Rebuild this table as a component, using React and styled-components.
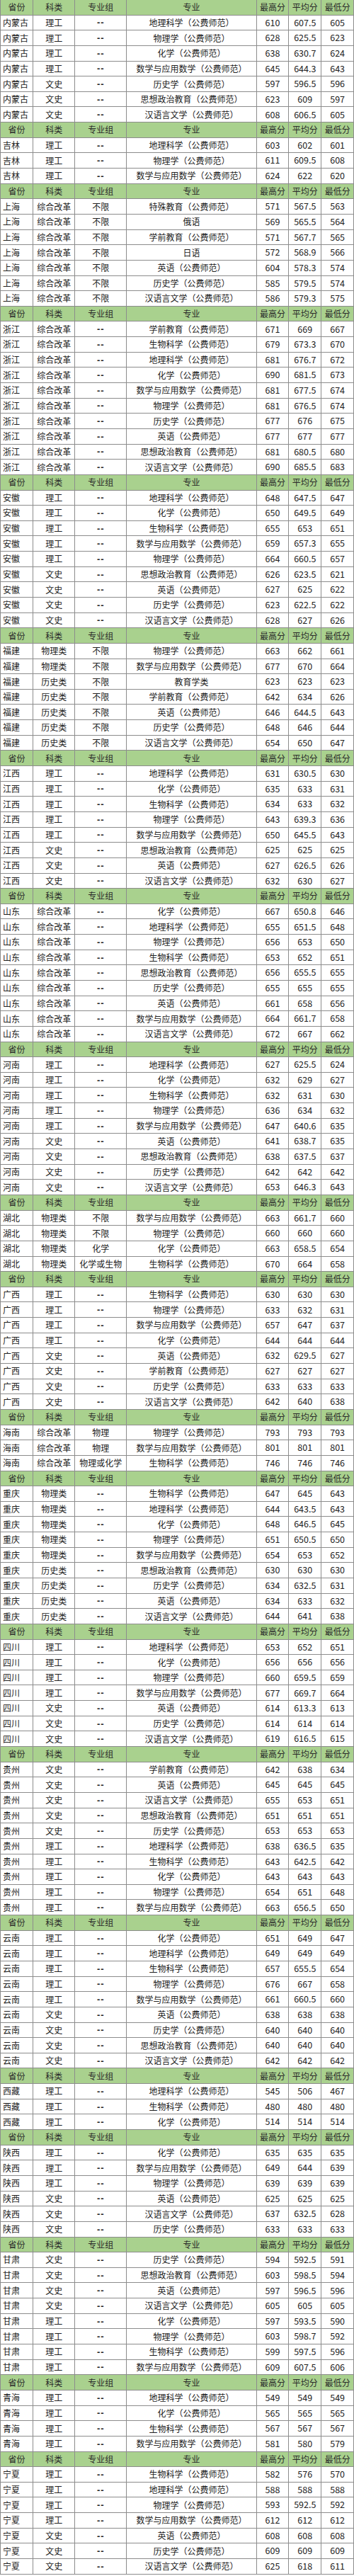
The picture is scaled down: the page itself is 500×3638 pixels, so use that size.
import React from "react";
import styled, { createGlobalStyle } from "styled-components";

const GlobalStyle = createGlobalStyle`
    html, body {
        margin: 0;
        padding: 0;
        background: #ffffff;
    }
    body {
        font-family: "Noto Sans CJK SC", "Liberation Sans", sans-serif;
        color: #222222;
    }
`;

const ROWS_TOTAL = 168;

const Sheet = styled.div`
    width: 500px;
    display: grid;
    grid-template-columns: 46px 59.3px 73px 183.4px 45.6px 46px 1fr;
    grid-auto-rows: calc(3638px / ${ROWS_TOTAL});
    border-left: 1px solid #8c8c8c;
    box-sizing: border-box;
`;

const Cell = styled.div`
    box-sizing: border-box;
    display: flex;
    align-items: center;
    justify-content: ${(p) => (p.$left ? "flex-start" : "center")};
    padding-left: ${(p) => (p.$left ? "3px" : "0")};
    border-right: 1px solid #8c8c8c;
    border-bottom: 1px solid #8c8c8c;
    background: ${(p) => (p.$head ? "#a9d18e" : "#ffffff")};
    font-size: 12px;
    line-height: 1;
    white-space: nowrap;
    overflow: hidden;
    color: ${(p) => (p.$head ? "#2b2b2b" : "#222222")};
`;

const Num = styled(Cell)`
    font-size: 12.5px;
`;

const Dash = styled(Cell)`
    font-family: "Liberation Sans", sans-serif;
    font-size: 13px;
    font-weight: bold;
    letter-spacing: 1px;
`;

const G = "（公费师范）";

const groups = [
    { p: "内蒙古", rows: [
        ["理工", "--", "地理科学" + G, "610", "607.5", "605"],
        ["理工", "--", "物理学" + G, "628", "625.5", "623"],
        ["理工", "--", "化学" + G, "638", "630.7", "624"],
        ["理工", "--", "数学与应用数学" + G, "645", "644.3", "643"],
        ["文史", "--", "历史学" + G, "597", "596.5", "596"],
        ["文史", "--", "思想政治教育" + G, "623", "609", "597"],
        ["文史", "--", "汉语言文学" + G, "608", "606.5", "605"],
    ]},
    { p: "吉林", rows: [
        ["理工", "--", "地理科学" + G, "603", "602", "601"],
        ["理工", "--", "物理学" + G, "611", "609.5", "608"],
        ["理工", "--", "数学与应用数学" + G, "624", "622", "620"],
    ]},
    { p: "上海", rows: [
        ["综合改革", "不限", "特殊教育" + G, "571", "567.5", "563"],
        ["综合改革", "不限", "俄语", "569", "565.5", "564"],
        ["综合改革", "不限", "学前教育" + G, "571", "567.7", "565"],
        ["综合改革", "不限", "日语", "572", "568.9", "566"],
        ["综合改革", "不限", "英语" + G, "604", "578.3", "574"],
        ["综合改革", "不限", "历史学" + G, "585", "579.5", "574"],
        ["综合改革", "不限", "汉语言文学" + G, "586", "579.3", "575"],
    ]},
    { p: "浙江", rows: [
        ["综合改革", "--", "学前教育" + G, "671", "669", "667"],
        ["综合改革", "--", "生物科学" + G, "679", "673.3", "670"],
        ["综合改革", "--", "地理科学" + G, "681", "676.7", "672"],
        ["综合改革", "--", "化学" + G, "690", "681.5", "673"],
        ["综合改革", "--", "数学与应用数学" + G, "681", "677.5", "674"],
        ["综合改革", "--", "物理学" + G, "681", "676.5", "674"],
        ["综合改革", "--", "历史学" + G, "677", "676", "675"],
        ["综合改革", "--", "英语" + G, "677", "677", "677"],
        ["综合改革", "--", "思想政治教育" + G, "681", "680.5", "680"],
        ["综合改革", "--", "汉语言文学" + G, "690", "685.5", "683"],
    ]},
    { p: "安徽", rows: [
        ["理工", "--", "地理科学" + G, "648", "647.5", "647"],
        ["理工", "--", "化学" + G, "650", "649.5", "649"],
        ["理工", "--", "生物科学" + G, "655", "653", "651"],
        ["理工", "--", "数学与应用数学" + G, "659", "657.3", "655"],
        ["理工", "--", "物理学" + G, "664", "660.5", "657"],
        ["文史", "--", "思想政治教育" + G, "626", "623.5", "621"],
        ["文史", "--", "英语" + G, "627", "625", "622"],
        ["文史", "--", "历史学" + G, "623", "622.5", "622"],
        ["文史", "--", "汉语言文学" + G, "628", "627", "626"],
    ]},
    { p: "福建", rows: [
        ["物理类", "不限", "物理学" + G, "663", "662", "661"],
        ["物理类", "不限", "数学与应用数学" + G, "677", "670", "664"],
        ["历史类", "不限", "教育学类", "623", "623", "623"],
        ["历史类", "不限", "学前教育" + G, "642", "634", "626"],
        ["历史类", "不限", "英语" + G, "646", "644.5", "643"],
        ["历史类", "不限", "历史学" + G, "648", "646", "644"],
        ["历史类", "不限", "汉语言文学" + G, "654", "650", "647"],
    ]},
    { p: "江西", rows: [
        ["理工", "--", "地理科学" + G, "631", "630.5", "630"],
        ["理工", "--", "化学" + G, "635", "633", "631"],
        ["理工", "--", "生物科学" + G, "634", "633", "632"],
        ["理工", "--", "物理学" + G, "643", "639.3", "636"],
        ["理工", "--", "数学与应用数学" + G, "650", "645.5", "643"],
        ["文史", "--", "思想政治教育" + G, "625", "625", "625"],
        ["文史", "--", "英语" + G, "627", "626.5", "626"],
        ["文史", "--", "汉语言文学" + G, "632", "630", "627"],
    ]},
    { p: "山东", rows: [
        ["综合改革", "--", "化学" + G, "667", "650.8", "646"],
        ["综合改革", "--", "地理科学" + G, "655", "651.5", "648"],
        ["综合改革", "--", "物理学" + G, "656", "653", "650"],
        ["综合改革", "--", "生物科学" + G, "653", "652", "651"],
        ["综合改革", "--", "思想政治教育" + G, "656", "655.5", "655"],
        ["综合改革", "--", "历史学" + G, "655", "655", "655"],
        ["综合改革", "--", "英语" + G, "661", "658", "656"],
        ["综合改革", "--", "数学与应用数学" + G, "664", "661.7", "658"],
        ["综合改革", "--", "汉语言文学" + G, "672", "667", "662"],
    ]},
    { p: "河南", rows: [
        ["理工", "--", "地理科学" + G, "627", "625.5", "624"],
        ["理工", "--", "化学" + G, "632", "629", "627"],
        ["理工", "--", "生物科学" + G, "632", "631", "630"],
        ["理工", "--", "物理学" + G, "636", "634", "632"],
        ["理工", "--", "数学与应用数学" + G, "647", "640.6", "635"],
        ["文史", "--", "英语" + G, "641", "638.7", "635"],
        ["文史", "--", "思想政治教育" + G, "638", "637.5", "637"],
        ["文史", "--", "历史学" + G, "642", "642", "642"],
        ["文史", "--", "汉语言文学" + G, "653", "646.3", "643"],
    ]},
    { p: "湖北", rows: [
        ["物理类", "不限", "数学与应用数学" + G, "663", "661.7", "660"],
        ["物理类", "不限", "物理学" + G, "660", "660", "660"],
        ["物理类", "化学", "化学" + G, "663", "658.5", "654"],
        ["物理类", "化学或生物", "生物科学" + G, "670", "664", "658"],
    ]},
    { p: "广西", rows: [
        ["理工", "--", "生物科学" + G, "630", "630", "630"],
        ["理工", "--", "物理学" + G, "633", "632", "631"],
        ["理工", "--", "数学与应用数学" + G, "657", "647", "637"],
        ["理工", "--", "化学" + G, "644", "644", "644"],
        ["文史", "--", "英语" + G, "632", "629.5", "627"],
        ["文史", "--", "学前教育" + G, "627", "627", "627"],
        ["文史", "--", "历史学" + G, "633", "633", "633"],
        ["文史", "--", "汉语言文学" + G, "642", "640", "638"],
    ]},
    { p: "海南", rows: [
        ["综合改革", "物理", "物理学" + G, "793", "793", "793"],
        ["综合改革", "物理", "数学与应用数学" + G, "801", "801", "801"],
        ["综合改革", "物理或化学", "生物科学" + G, "746", "746", "746"],
    ]},
    { p: "重庆", rows: [
        ["物理类", "--", "生物科学" + G, "647", "645", "643"],
        ["物理类", "--", "地理科学" + G, "644", "643.5", "643"],
        ["物理类", "--", "化学" + G, "648", "646.5", "645"],
        ["物理类", "--", "物理学" + G, "651", "650.5", "650"],
        ["物理类", "--", "数学与应用数学" + G, "654", "653", "652"],
        ["历史类", "--", "思想政治教育" + G, "630", "630", "630"],
        ["历史类", "--", "历史学" + G, "634", "632.5", "631"],
        ["历史类", "--", "英语" + G, "634", "633", "632"],
        ["历史类", "--", "汉语言文学" + G, "644", "641", "638"],
    ]},
    { p: "四川", rows: [
        ["理工", "--", "地理科学" + G, "653", "652", "651"],
        ["理工", "--", "化学" + G, "656", "656", "656"],
        ["理工", "--", "物理学" + G, "660", "659.5", "659"],
        ["理工", "--", "数学与应用数学" + G, "677", "669.7", "664"],
        ["文史", "--", "英语" + G, "614", "613.3", "613"],
        ["文史", "--", "历史学" + G, "614", "614", "614"],
        ["文史", "--", "汉语言文学" + G, "619", "616.5", "615"],
    ]},
    { p: "贵州", rows: [
        ["文史", "--", "学前教育" + G, "642", "638", "634"],
        ["文史", "--", "英语" + G, "645", "645", "645"],
        ["文史", "--", "汉语言文学" + G, "655", "653", "651"],
        ["文史", "--", "思想政治教育" + G, "651", "651", "651"],
        ["文史", "--", "历史学" + G, "653", "653", "653"],
        ["理工", "--", "地理科学" + G, "638", "636.5", "635"],
        ["理工", "--", "生物科学" + G, "643", "642.5", "642"],
        ["理工", "--", "化学" + G, "643", "643", "643"],
        ["理工", "--", "物理学" + G, "654", "651", "648"],
        ["理工", "--", "数学与应用数学" + G, "663", "656.5", "650"],
    ]},
    { p: "云南", rows: [
        ["理工", "--", "化学" + G, "651", "649", "647"],
        ["理工", "--", "地理科学" + G, "649", "649", "649"],
        ["理工", "--", "生物科学" + G, "657", "655.5", "654"],
        ["理工", "--", "物理学" + G, "676", "667", "658"],
        ["理工", "--", "数学与应用数学" + G, "661", "660.5", "660"],
        ["文史", "--", "英语" + G, "638", "638", "638"],
        ["文史", "--", "历史学" + G, "640", "640", "640"],
        ["文史", "--", "思想政治教育" + G, "640", "640", "640"],
        ["文史", "--", "汉语言文学" + G, "642", "642", "642"],
    ]},
    { p: "西藏", rows: [
        ["理工", "--", "地理科学" + G, "545", "506", "467"],
        ["理工", "--", "生物科学" + G, "480", "480", "480"],
        ["理工", "--", "化学" + G, "514", "514", "514"],
    ]},
    { p: "陕西", rows: [
        ["理工", "--", "化学" + G, "635", "635", "635"],
        ["理工", "--", "数学与应用数学" + G, "649", "644", "639"],
        ["理工", "--", "物理学" + G, "639", "639", "639"],
        ["文史", "--", "英语" + G, "625", "625", "625"],
        ["文史", "--", "汉语言文学" + G, "637", "632.5", "628"],
        ["文史", "--", "历史学" + G, "633", "633", "633"],
    ]},
    { p: "甘肃", rows: [
        ["文史", "--", "历史学" + G, "594", "592.5", "591"],
        ["文史", "--", "思想政治教育" + G, "603", "598.5", "594"],
        ["文史", "--", "英语" + G, "597", "596.5", "596"],
        ["文史", "--", "汉语言文学" + G, "605", "605", "605"],
        ["理工", "--", "化学" + G, "597", "593.5", "590"],
        ["理工", "--", "物理学" + G, "603", "598.7", "592"],
        ["理工", "--", "生物科学" + G, "599", "597.5", "596"],
        ["理工", "--", "数学与应用数学" + G, "609", "607.5", "606"],
    ]},
    { p: "青海", rows: [
        ["理工", "--", "地理科学" + G, "549", "549", "549"],
        ["理工", "--", "化学" + G, "565", "565", "565"],
        ["理工", "--", "生物科学" + G, "567", "567", "567"],
        ["理工", "--", "数学与应用数学" + G, "581", "580", "579"],
    ]},
    { p: "宁夏", rows: [
        ["理工", "--", "生物科学" + G, "582", "576", "570"],
        ["理工", "--", "地理科学" + G, "588", "588", "588"],
        ["理工", "--", "物理学" + G, "593", "592.5", "592"],
        ["理工", "--", "数学与应用数学" + G, "612", "612", "612"],
        ["文史", "--", "英语" + G, "608", "608", "608"],
        ["文史", "--", "历史学" + G, "609", "609", "609"],
        ["文史", "--", "汉语言文学" + G, "625", "618", "611"],
    ]},
];

const headers = ["省份", "科类", "专业组", "专业", "最高分", "平均分", "最低分"];

const HeaderRow = () => (
    <>
        {headers.map((h) => (
            <Cell key={h} $head>{h}</Cell>
        ))}
    </>
);

const DataRow = ({ province, row }) => (
    <>
        <Cell $left>{province}</Cell>
        <Cell>{row[0]}</Cell>
        {row[1] === "--" ? <Dash>{row[1]}</Dash> : <Cell>{row[1]}</Cell>}
        <Cell>{row[2]}</Cell>
        <Num>{row[3]}</Num>
        <Num>{row[4]}</Num>
        <Num>{row[5]}</Num>
    </>
);

const App = () => {
    return (
        <>
            <GlobalStyle />
            <Sheet>
                {groups.map((g) => (
                    <React.Fragment key={g.p}>
                        <HeaderRow />
                        {g.rows.map((r, i) => (
                            <DataRow key={i} province={g.p} row={r} />
                        ))}
                    </React.Fragment>
                ))}
            </Sheet>
        </>
    );
};

export default App;
